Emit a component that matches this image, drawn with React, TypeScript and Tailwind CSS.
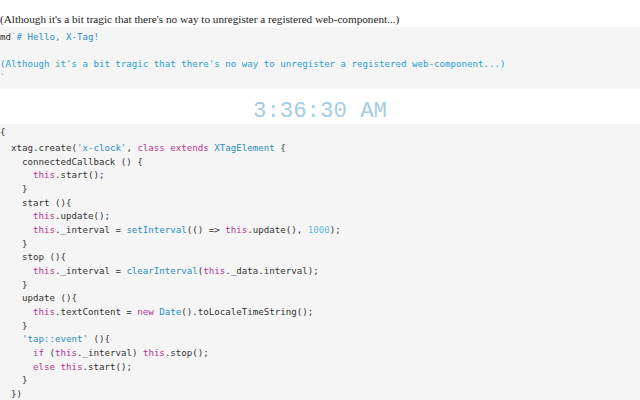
import React from 'react';

const mono = { fontFamily: '"DejaVu Sans Mono", monospace' };

// token helpers
const K = ({ children }: { children: React.ReactNode }) => <span className="text-[#b5368f]">{children}</span>;
const B = ({ children }: { children: React.ReactNode }) => <span className="text-[#2a8fbd]">{children}</span>;
const N = ({ children }: { children: React.ReactNode }) => <span className="text-[#6ab8da]">{children}</span>;

const codeLines: React.ReactNode[] = [
  <>  xtag.create(<B>'x-clock'</B>, <K>class</K> <K>extends</K> <B>XTagElement</B> {'{'}</>,
  <>    connectedCallback () {'{'}</>,
  <>      <K>this</K>.start();</>,
  <>    {'}'}</>,
  <>    start (){'{'}</>,
  <>      <K>this</K>.update();</>,
  <>      <K>this</K>._interval = <B>setInterval</B>(() =&gt; <K>this</K>.update(), <N>1000</N>);</>,
  <>    {'}'}</>,
  <>    stop (){'{'}</>,
  <>      <K>this</K>._interval = <B>clearInterval</B>(<K>this</K>._data.interval);</>,
  <>    {'}'}</>,
  <>    update (){'{'}</>,
  <>      <K>this</K>.textContent = <K>new</K> <B>Date</B>().toLocaleTimeString();</>,
  <>    {'}'}</>,
  <>    <B>'tap::event'</B> (){'{'}</>,
  <>      <K>if</K> (<K>this</K>._interval) <K>this</K>.stop();</>,
  <>      <K>else</K> <K>this</K>.start();</>,
  <>    {'}'}</>,
  <>  {'})'}</>,
];

export default function App() {
  return (
    <div className="w-[640px] h-[400px] overflow-hidden bg-white text-[#333]">
      <div className="pt-[13px] h-[27px] text-[11.2px] leading-[13px] text-[#222]" style={{ fontFamily: '"Liberation Serif", serif' }}>
        (Although it's a bit tragic that there's no way to unregister a registered web-component...)
      </div>
      <div className="h-[62px] bg-[#f5f5f5] pt-[4px] text-[9.15px] leading-[13.6px] whitespace-pre" style={mono}>
        <div><span className="text-[#333]">md</span><span className="text-[#999]">`</span><B># Hello, X-Tag!</B></div>
        <div>&nbsp;</div>
        <div className="text-[#2a9fd0]">(Although it's a bit tragic that there's no way to unregister a registered web-component...)</div>
        <div className="text-[#999]">`</div>
      </div>
      <div className="h-[35px] flex items-center justify-center text-[22.3px] text-[#a3cde4] pt-[10px]" style={{ fontFamily: '"Liberation Mono", monospace' }}>
        3:36:30 AM
      </div>
      <div className="h-[276px] bg-[#f5f5f5] pt-[2px] text-[9.15px] leading-[13.65px] whitespace-pre" style={mono}>
        <div className="h-[16px]">{'{'}</div>
        {codeLines.map((l, i) => (
          <div key={i}>{l}</div>
        ))}
      </div>
    </div>
  );
}
